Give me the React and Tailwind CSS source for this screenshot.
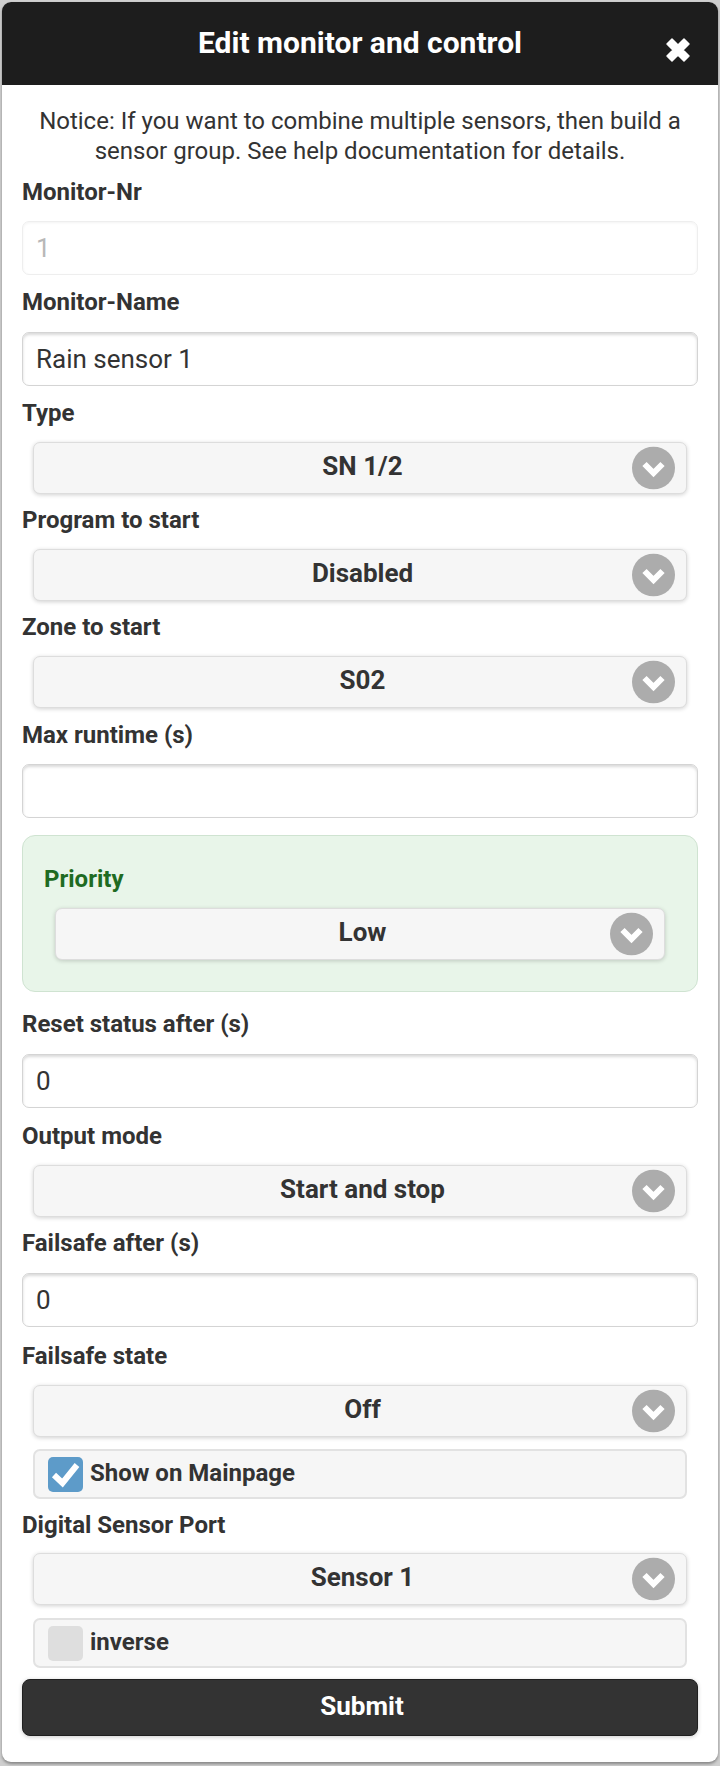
import React from "react";

const font = { fontFamily: "Roboto, 'Noto Sans', sans-serif" };

function Label({ children, className = "" }) {
  return (
    <div className={"h-[28px] text-[24px] leading-[28px] font-bold text-[#333] " + className}>
      {children}
    </div>
  );
}

function TextInput({ value, disabled, className = "" }) {
  return (
    <div
      className={
        "h-[54px] rounded-[7px] flex items-center px-[13px] text-[26px] bg-white " +
        (disabled
          ? "border border-[#eeeeee] text-[#b8b8b8] shadow-[inset_0_1px_3px_rgba(0,0,0,0.05)] "
          : "border border-[#d4d4d4] text-[#333] shadow-[inset_0_2px_3px_rgba(0,0,0,0.15)] ") +
        className
      }
    >
      {value}
    </div>
  );
}

function Chevron() {
  return (
    <svg width="43" height="43" viewBox="0 0 43 43" className="shrink-0">
      <circle cx="21.5" cy="21.5" r="21.5" fill="#acacac" />
      <polyline
        points="12.5,17.5 21.5,26.5 30.5,17.5"
        fill="none"
        stroke="#fff"
        strokeWidth="6"
        strokeLinecap="butt"
        strokeLinejoin="miter"
      />
    </svg>
  );
}

function Select({ value, className = "" }) {
  return (
    <div
      className={
        "relative h-[52px] rounded-[7px] bg-[#f6f6f6] border border-[#dddddd] shadow-[0_1px_4px_rgba(0,0,0,0.18)] flex items-center justify-center pl-[5px] pb-[4px] text-[26px] font-bold text-[#333] " +
        className
      }
    >
      <span>{value}</span>
      <div className="absolute right-[11px] top-1/2 -translate-y-1/2 flex">
        <Chevron />
      </div>
    </div>
  );
}

function CheckRow({ label, checked, className = "" }) {
  return (
    <div
      className={
        "h-[50px] rounded-[7px] bg-[#f6f6f6] border-2 border-[#e2e2e2] flex items-center pl-[13px] gap-[7px] mx-[11px] " +
        className
      }
    >
      {checked ? (
        <div className="w-[35px] h-[35px] rounded-[5px] bg-[#5d9bc9] flex items-center justify-center">
          <svg width="32" height="32" viewBox="0 0 32 32">
            <polyline
              points="4,17 12.5,25 27,7"
              fill="none"
              stroke="#fff"
              strokeWidth="6"
              strokeLinecap="butt"
              strokeLinejoin="miter"
            />
          </svg>
        </div>
      ) : (
        <div className="w-[35px] h-[35px] rounded-[5px] bg-[#dedede]" />
      )}
      <span className="text-[24px] font-bold text-[#333] pb-[2px]">{label}</span>
    </div>
  );
}

export default function App() {
  return (
    <div style={font} className="w-[720px] h-[1766px] bg-[#cfcfcf] pt-[2px] px-[2px]">
      <div className="h-[1760px] bg-white rounded-[9px] overflow-hidden shadow-[0_2px_3px_rgba(0,0,0,0.35)] flex flex-col">
        <div className="h-[83px] bg-[#1d1d1d] relative flex items-center justify-center pb-[3px]">
          <span className="text-white text-[30px] font-bold">Edit monitor and control</span>
          <div className="absolute left-[661px] top-[33px]">
            <svg width="30" height="30" viewBox="0 0 30 30">
              <path
                d="M4 9 L9 4 L15 10 L21 4 L26 9 L20 15 L26 21 L21 26 L15 20 L9 26 L4 21 L10 15 Z"
                fill="#fff"
                stroke="#fff"
                strokeWidth="1.5"
                strokeLinejoin="round"
              />
            </svg>
          </div>
        </div>
        <div className="px-[20px] flex flex-col">
          <div className="pt-[21px] text-center text-[24px] leading-[30px] text-[#333]">
            Notice: If you want to combine multiple sensors, then build a sensor group. See help documentation for details.
          </div>
          <Label className="mt-[12px]">Monitor-Nr</Label>
          <TextInput value="1" disabled className="mt-[15px]" />
          <Label className="mt-[13px]">Monitor-Name</Label>
          <TextInput value="Rain sensor 1" className="mt-[16px]" />
          <Label className="mt-[13px]">Type</Label>
          <Select value="SN 1/2" className="mt-[15px] mx-[11px]" />
          <Label className="mt-[12px]">Program to start</Label>
          <Select value="Disabled" className="mt-[15px] mx-[11px]" />
          <Label className="mt-[12px]">Zone to start</Label>
          <Select value="S02" className="mt-[15px] mx-[11px]" />
          <Label className="mt-[13px]">Max runtime (s)</Label>
          <TextInput value="" className="mt-[15px]" />
          <div className="mt-[17px] rounded-[13px] bg-[#e8f5e9] border border-[#cfe3d1] px-[21px] pt-[29px] pb-[31px]">
            <div className="h-[28px] text-[24px] leading-[28px] font-bold text-[#1e6b22]">Priority</div>
            <Select value="Low" className="mt-[15px] mx-[11px]" />
          </div>
          <Label className="mt-[18px]">Reset status after (s)</Label>
          <TextInput value="0" className="mt-[16px]" />
          <Label className="mt-[14px]">Output mode</Label>
          <Select value="Start and stop" className="mt-[15px] mx-[11px]" />
          <Label className="mt-[12px]">Failsafe after (s)</Label>
          <TextInput value="0" className="mt-[16px]" />
          <Label className="mt-[15px]">Failsafe state</Label>
          <Select value="Off" className="mt-[15px] mx-[11px]" />
          <CheckRow label="Show on Mainpage" checked className="mt-[12px]" />
          <Label className="mt-[12px]">Digital Sensor Port</Label>
          <Select value="Sensor 1" className="mt-[14px] mx-[11px]" />
          <CheckRow label="inverse" className="mt-[13px]" />
          <div className="mt-[11px] h-[57px] rounded-[8px] bg-[#333] border border-[#1f1f1f] flex items-center justify-center pl-[4px] pb-[3px] text-white text-[26px] font-bold shadow-[0_1px_4px_rgba(0,0,0,0.2)]">
            Submit
          </div>
        </div>
      </div>
    </div>
  );
}
